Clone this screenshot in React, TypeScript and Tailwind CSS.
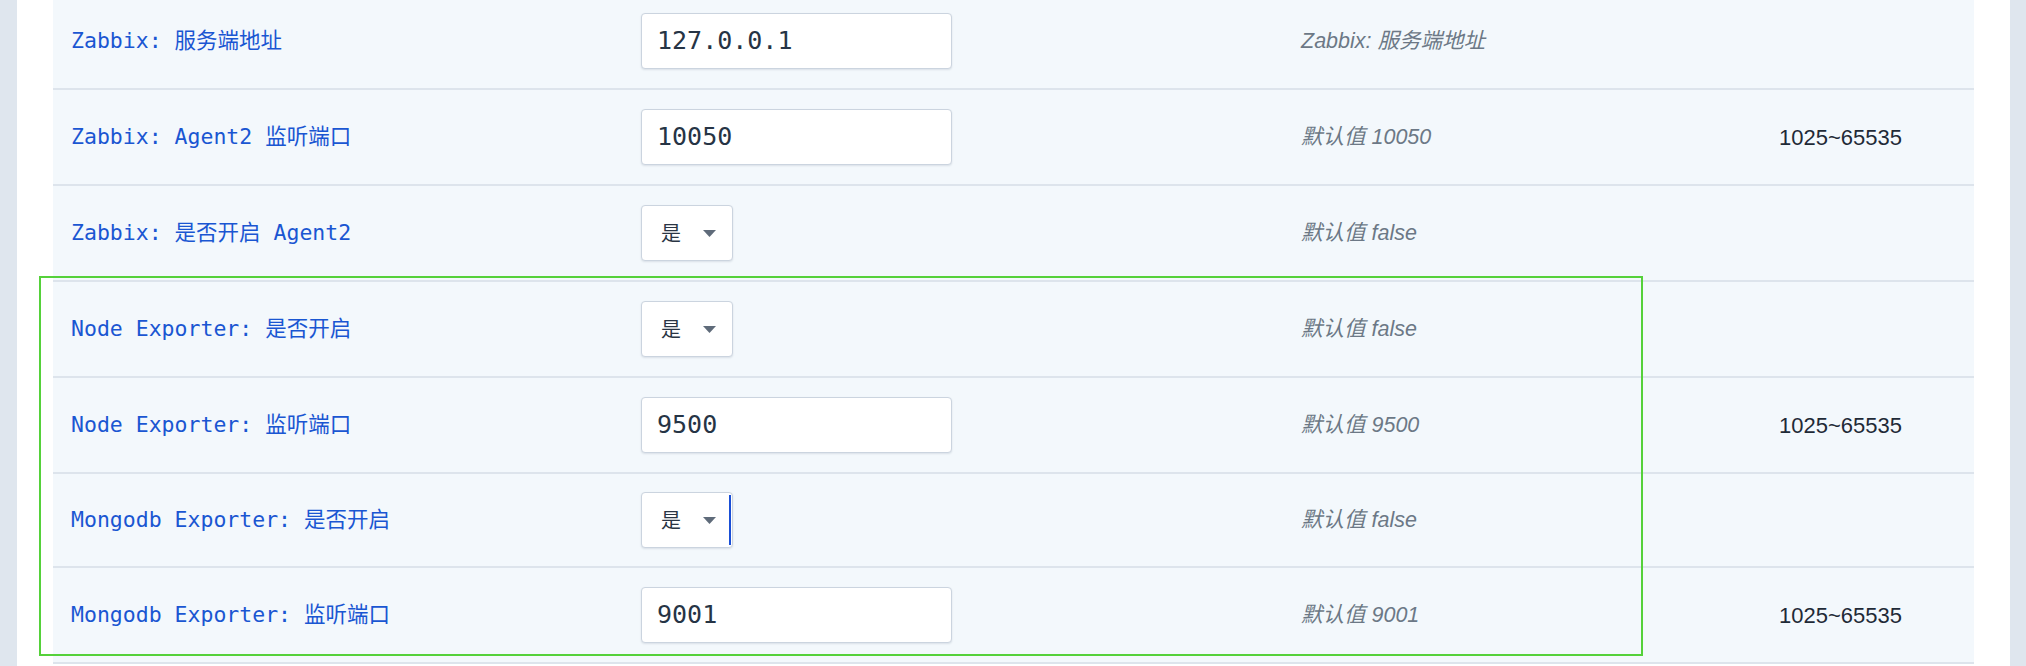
const rows = [
  { label: "Zabbix: 服务端地址", kind: "input", value: "127.0.0.1", desc: "Zabbix: 服务端地址", range: "", h: "h-[94px]" },
  { label: "Zabbix: Agent2 监听端口", kind: "input", value: "10050", desc: "默认值 10050", range: "1025~65535", h: "h-[94px]" },
  { label: "Zabbix: 是否开启 Agent2", kind: "select", value: "是", desc: "默认值 false", range: "", h: "h-[94px]" },
  { label: "Node Exporter: 是否开启", kind: "select", value: "是", desc: "默认值 false", range: "", h: "h-[94px]" },
  { label: "Node Exporter: 监听端口", kind: "input", value: "9500", desc: "默认值 9500", range: "1025~65535", h: "h-[94px]" },
  { label: "Mongodb Exporter: 是否开启", kind: "select", value: "是", desc: "默认值 false", range: "", h: "h-[92px]", focus: true },
  { label: "Mongodb Exporter: 监听端口", kind: "input", value: "9001", desc: "默认值 9001", range: "1025~65535", h: "h-[94px]" },
];

const mono = "font-['DejaVu_Sans_Mono','Noto_Sans_CJK_SC',monospace]";

const Select = ({ value, focus }: { value: string; focus?: boolean }) => (
  <div className="relative flex items-center w-[92px] h-[56px] bg-white border border-[#cbd4df] rounded-[4px] shadow-[0_1px_2px_rgba(30,50,80,0.12)] pl-[19px]">
    <span className="text-[20px] text-[#2a3544] font-['Noto_Sans_CJK_SC',sans-serif] leading-none">{value}</span>
    <svg className="ml-[22px]" width="13" height="7" viewBox="0 0 13 7">
      <path d="M0 0 L13 0 L6.5 7 Z" fill="#5f6b7a" />
    </svg>
    {focus && <span className="absolute right-[1px] top-[2px] bottom-[2px] w-[2px] bg-[#1a4fd6]" />}
  </div>
);

const Input = ({ value }: { value: string }) => (
  <div className={`flex items-center w-[311px] h-[56px] bg-white border border-[#cbd4df] rounded-[4px] shadow-[0_1px_2px_rgba(30,50,80,0.12)] pl-[15px] text-[25px] text-[#263445] ${mono}`}>
    {value}
  </div>
);

export default function App() {
  return (
    <div className="flex h-[666px] w-[2026px] overflow-hidden bg-[#dfe6ee]">
      <div className="w-[17px] shrink-0" />
      <div className="relative flex-1 bg-white px-[36px]">
        <div className="-mt-[6px]">
          {rows.map((r, i) => (
            <div
              key={i}
              className={`grid grid-cols-[588px_660px_478px_1fr] items-center ${r.h} box-content bg-[#f3f8fc] border-b-2 border-[#dde4ec]`}
            >
              <div className={`pl-[18px] text-[21.5px] text-[#1a56d2] ${mono}`}>{r.label}</div>
              <div>{r.kind === "input" ? <Input value={r.value} /> : <Select value={r.value} focus={r.focus} />}</div>
              <div className="italic text-[21.5px] text-[#6c7886] font-['Liberation_Sans','Noto_Sans_CJK_SC',sans-serif]">{r.desc}</div>
              <div className="text-[22px] text-[#1f2a37] font-['Liberation_Sans',sans-serif]">{r.range}</div>
            </div>
          ))}
        </div>
        <div className="absolute left-[22px] top-[276px] w-[1604px] h-[380px] border-2 border-[#55d13a] pointer-events-none" />
      </div>
      <div className="w-[16px] shrink-0" />
    </div>
  );
}
